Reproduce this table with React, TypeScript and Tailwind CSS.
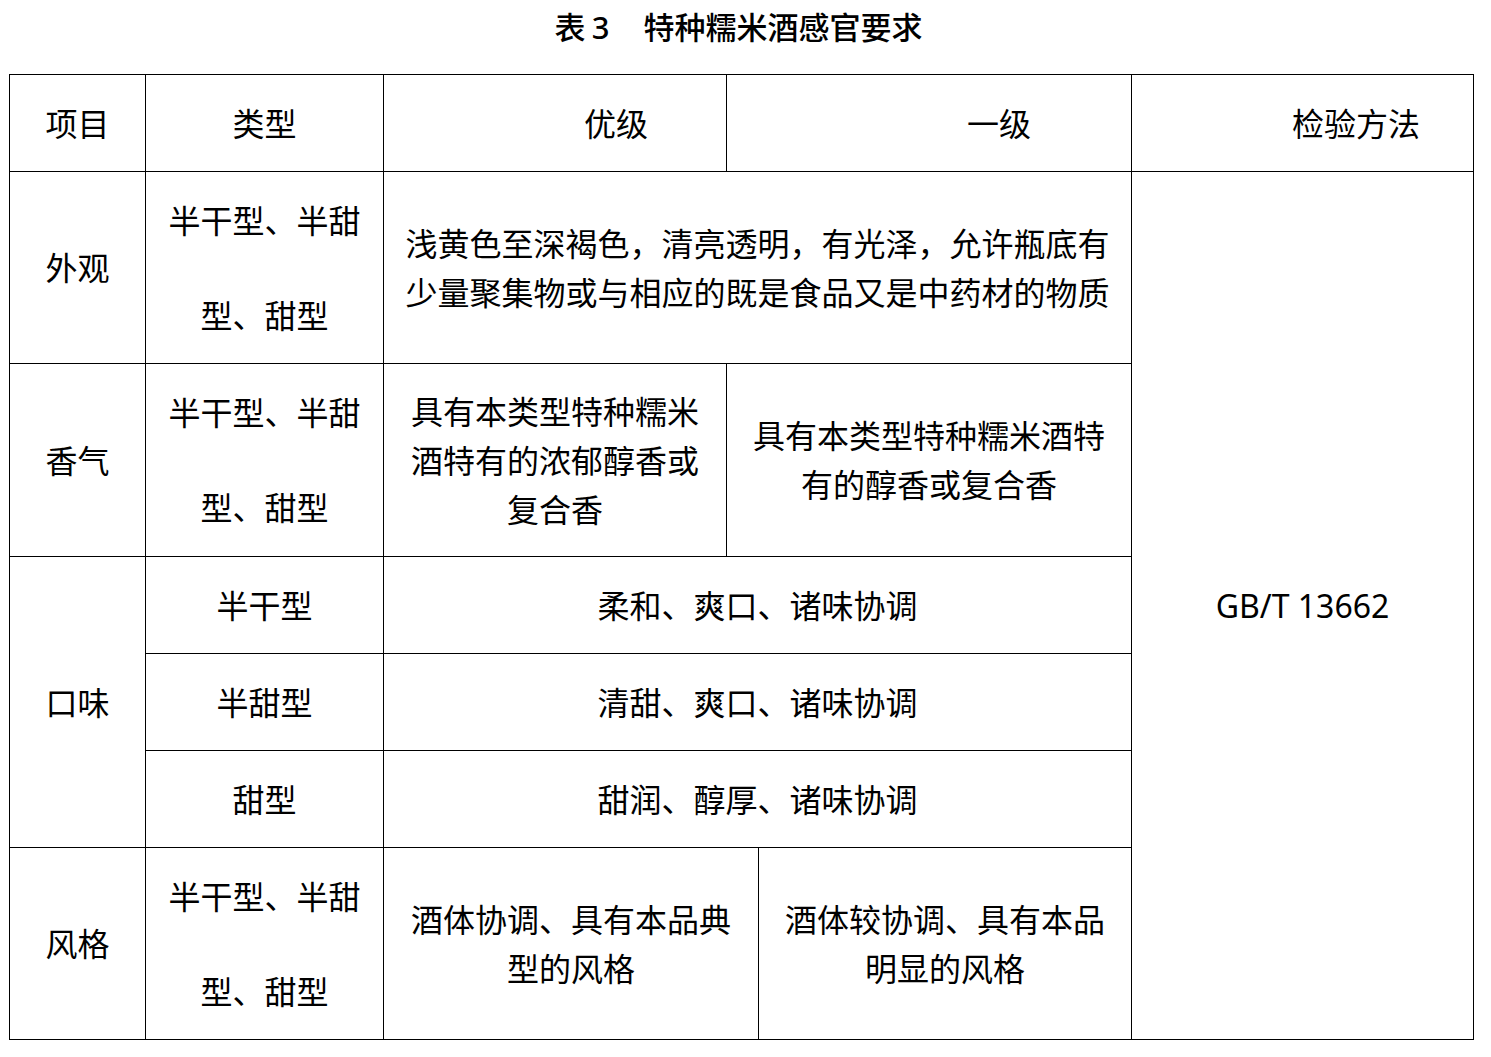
import React from "react";

const cell = "flex items-center justify-center text-center border-r border-b border-black";

const App: React.FC = () => {
  return (
    <div className="w-[1491px] min-h-[1057px] bg-white text-black font-['Noto_Sans','Noto_Sans_CJK_SC',sans-serif]">
      {/* title */}
      <div className="flex justify-center items-center h-[40px] mt-[7px] text-[31px] font-medium leading-[40px] pr-[14px]">
        <span className="[word-spacing:-2px]">表 3</span>
        <span className="ml-[34px]">特种糯米酒感官要求</span>
      </div>

      {/* table */}
      <div className="ml-[9px] mt-[27px] grid w-[1465px] grid-cols-[136px_238px_343px_32px_373px_342px] grid-rows-[97px_192px_193px_97px_97px_97px_192px] border-l border-t border-black text-[32px] leading-[49px]">
        {/* header */}
        <div className={cell}>项目</div>
        <div className={cell}>类型</div>
        <div className="flex items-center border-r border-b border-black pl-[200px]">优级</div>
        <div className="col-span-2 flex items-center border-r border-b border-black pl-[240px]">一级</div>
        <div className="flex items-center border-r border-b border-black pl-[160px]">检验方法</div>

        {/* 外观 */}
        <div className={`${cell} row-start-2 col-start-1`}>外观</div>
        <div className={`${cell} row-start-2 col-start-2 leading-[95px]`}>
          <p>半干型、半甜<br />型、甜型</p>
        </div>
        <div className={`${cell} row-start-2 col-start-3 col-span-3`}>
          <p>
            浅黄色至深褐色，清亮透明，有光泽，允许瓶底有
            <br />
            少量聚集物或与相应的既是食品又是中药材的物质
          </p>
        </div>
        <div className={`${cell} row-start-2 col-start-6 row-span-6`}>GB/T 13662</div>

        {/* 香气 */}
        <div className={`${cell} row-start-3 col-start-1`}>香气</div>
        <div className={`${cell} row-start-3 col-start-2 leading-[95px]`}>
          <p>半干型、半甜<br />型、甜型</p>
        </div>
        <div className={`${cell} row-start-3 col-start-3`}>
          <p>具有本类型特种糯米<br />酒特有的浓郁醇香或<br />复合香</p>
        </div>
        <div className={`${cell} row-start-3 col-start-4 col-span-2`}>
          <p>具有本类型特种糯米酒特<br />有的醇香或复合香</p>
        </div>

        {/* 口味 */}
        <div className={`${cell} row-start-4 col-start-1 row-span-3`}>口味</div>
        <div className={`${cell} row-start-4 col-start-2`}>半干型</div>
        <div className={`${cell} row-start-4 col-start-3 col-span-3`}>柔和、爽口、诸味协调</div>
        <div className={`${cell} row-start-5 col-start-2`}>半甜型</div>
        <div className={`${cell} row-start-5 col-start-3 col-span-3`}>清甜、爽口、诸味协调</div>
        <div className={`${cell} row-start-6 col-start-2`}>甜型</div>
        <div className={`${cell} row-start-6 col-start-3 col-span-3`}>甜润、醇厚、诸味协调</div>

        {/* 风格 */}
        <div className={`${cell} row-start-7 col-start-1`}>风格</div>
        <div className={`${cell} row-start-7 col-start-2 leading-[95px]`}>
          <p>半干型、半甜<br />型、甜型</p>
        </div>
        <div className={`${cell} row-start-7 col-start-3 col-span-2`}>
          <p>酒体协调、具有本品典<br />型的风格</p>
        </div>
        <div className={`${cell} row-start-7 col-start-5`}>
          <p>酒体较协调、具有本品<br />明显的风格</p>
        </div>
      </div>
    </div>
  );
};

export default App;
